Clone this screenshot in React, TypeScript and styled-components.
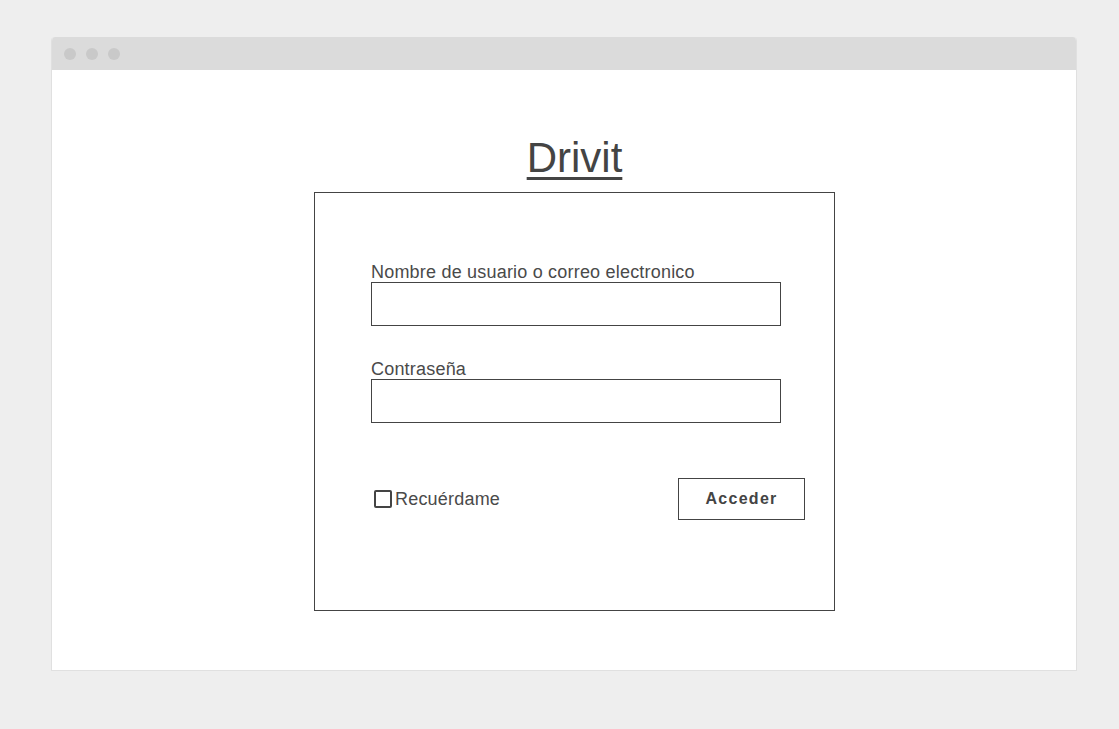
import React from "react";
import styled, { createGlobalStyle } from "styled-components";

const Global = createGlobalStyle`
  html, body { margin: 0; padding: 0; background: #eeeeee; }
  body { font-family: "Liberation Sans", Arial, sans-serif; color: #444; }
`;

const Page = styled.div`
  padding: 37px 42px 58px 51px;
`;

const Window = styled.div`
  width: 1026px;
  height: 634px;
  box-sizing: border-box;
  background: #fff;
  border: 1px solid #e0e0e0;
  border-top: none;
  border-radius: 4px 4px 0 0;
  display: flex;
  flex-direction: column;
  overflow: hidden;
`;

const TitleBar = styled.div`
  height: 33px;
  background: #dbdbdb;
  display: flex;
  align-items: center;
  gap: 10px;
  padding-left: 12px;
  flex-shrink: 0;
`;

const Dot = styled.span`
  width: 12px;
  height: 12px;
  border-radius: 50%;
  background: #c9c9c9;
`;

const Content = styled.div`
  display: flex;
  flex-direction: column;
  align-items: center;
  padding: 64px 0 0 21px;
`;

const Title = styled.h1`
  margin: 0 0 10px;
  font-size: 42px;
  line-height: 48px;
  font-weight: 400;
  color: #444;
  text-decoration: underline;
  text-decoration-thickness: 3px;
  text-underline-offset: 5px;
`;

const Card = styled.form`
  width: 521px;
  height: 419px;
  box-sizing: border-box;
  border: 1px solid #444;
  padding: 69px 0 0 56px;
  display: flex;
  flex-direction: column;
`;

const Field = styled.div<{ $gap?: number }>`
  display: flex;
  flex-direction: column;
  margin-bottom: ${(p) => p.$gap ?? 0}px;
`;

const Label = styled.label`
  font-size: 18px;
  line-height: 20px;
  letter-spacing: 0.2px;
  color: #4a4a4a;
`;

const Input = styled.div`
  width: 410px;
  height: 44px;
  box-sizing: border-box;
  border: 1px solid #444;
  background: #fff;
`;

const Row = styled.div`
  display: flex;
  align-items: center;
  justify-content: space-between;
  width: 434px;
  height: 42px;
`;

const Check = styled.span`
  display: flex;
  align-items: center;
  gap: 3px;
  margin-left: 3px;
  font-size: 18px;
  letter-spacing: 0.2px;
  color: #4a4a4a;
`;

const Box = styled.span`
  width: 18px;
  height: 18px;
  box-sizing: border-box;
  border: 2px solid #444;
  border-radius: 2px;
`;

const Button = styled.button`
  width: 127px;
  height: 42px;
  box-sizing: border-box;
  border: 1px solid #444;
  background: #fff;
  font-family: "Liberation Sans", Arial, sans-serif;
  font-weight: 700;
  font-size: 16px;
  letter-spacing: 1.3px;
  color: #444;
  padding: 0;
`;

export default function App() {
  return (
    <>
      <Global />
      <Page>
        <Window>
          <TitleBar>
            <Dot />
            <Dot />
            <Dot />
          </TitleBar>
          <Content>
            <Title>Drivit</Title>
            <Card>
              <Field $gap={33}>
                <Label>Nombre de usuario o correo electronico</Label>
                <Input />
              </Field>
              <Field $gap={55}>
                <Label>Contraseña</Label>
                <Input />
              </Field>
              <Row>
                <Check>
                  <Box />
                  Recuérdame
                </Check>
                <Button type="button">Acceder</Button>
              </Row>
            </Card>
          </Content>
        </Window>
      </Page>
    </>
  );
}
